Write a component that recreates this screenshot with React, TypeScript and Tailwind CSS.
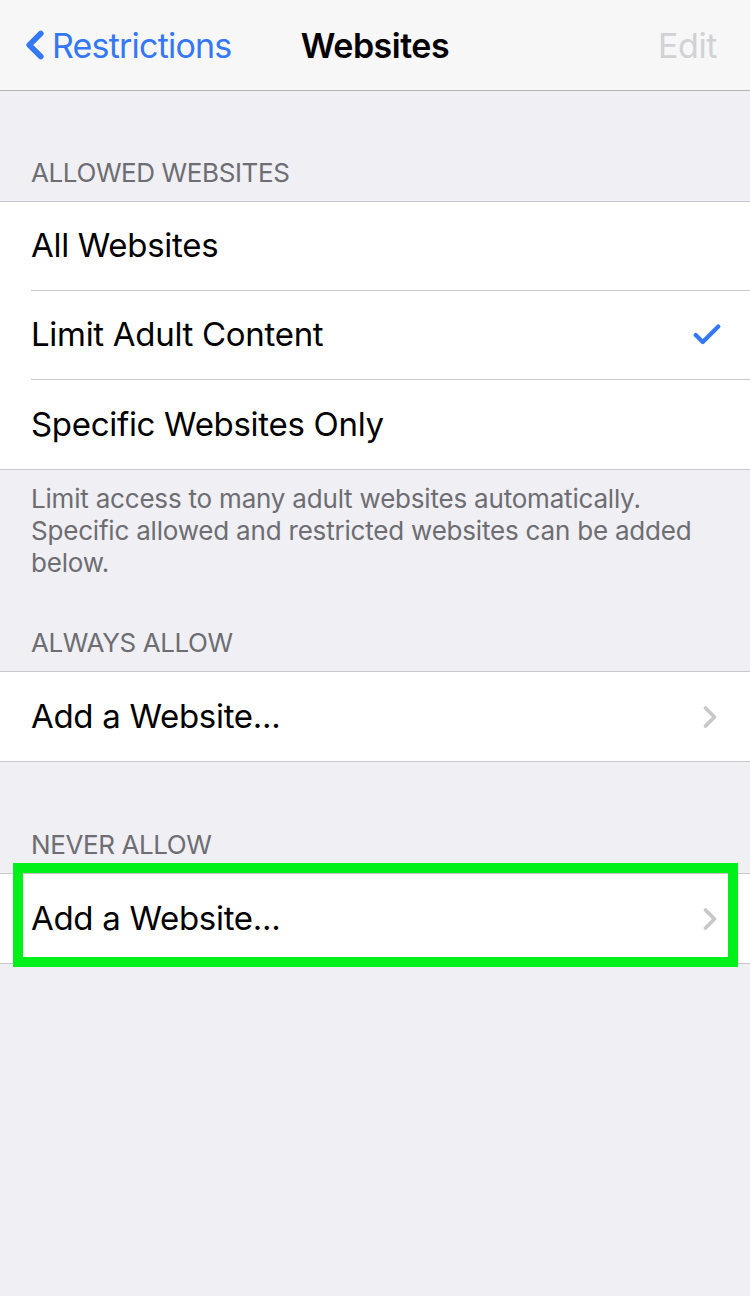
import { ChevronLeft, ChevronRight, Check } from "lucide-react"

type Row = { label: string; checked?: boolean; chevron?: boolean }

function SectionHeader({ text, pt }: { text: string; pt: string }) {
  return (
    <div className={`px-[31px] pb-[13px] ${pt} text-[26px] leading-[31px] text-[#6d6d72] uppercase tracking-[-0.4px]`}>
      {text}
    </div>
  )
}

function Group({ rows }: { rows: Row[] }) {
  return (
    <div className="bg-white border-y border-[#c8c7cc]">
      {rows.map((row, i) => (
        <div key={i} className="pl-[31px]">
          <div
            className={`h-[89px] flex items-center pr-[30px] ${
              i < rows.length - 1 ? "border-b border-[#c8c7cc]" : ""
            }`}
          >
            <span className="flex-1 text-[33px] text-black tracking-[-0.3px]">{row.label}</span>
            {row.checked && <Check size={34} strokeWidth={3} className="text-[#3478f6] mr-[-4px]" />}
            {row.chevron && <ChevronRight size={36} strokeWidth={2.5} className="text-[#c7c7cc] mr-[-8px]" />}
          </div>
        </div>
      ))}
    </div>
  )
}

export default function App() {
  return (
    <div
      className="w-[750px] min-h-[1296px] bg-[#efeff4]"
      style={{ fontFamily: "Inter, 'Liberation Sans', sans-serif" }}
    >
      {/* Nav bar */}
      <div className="relative h-[91px] bg-[#f7f7f7] border-b border-[#b2b2b2] flex items-center">
        <div className="flex items-center pl-[12px] text-[#3478f6]">
          <ChevronLeft size={46} strokeWidth={3} className="-mr-[6px]" />
          <span className="text-[34px] tracking-[-0.8px]">Restrictions</span>
        </div>
        <div className="absolute left-0 right-0 text-center text-[34px] font-semibold text-black tracking-[-0.5px] pointer-events-none">
          Websites
        </div>
        <span className="ml-auto pr-[33px] text-[34px] text-[#d1d1d6] tracking-[-0.4px]">Edit</span>
      </div>

      <SectionHeader text="Allowed Websites" pt="pt-[66px]" />
      <Group
        rows={[
          { label: "All Websites" },
          { label: "Limit Adult Content", checked: true },
          { label: "Specific Websites Only" },
        ]}
      />
      <div className="px-[31px] pt-[13px] text-[26px] leading-[32px] text-[#6d6d72] tracking-[-0.2px]">
        Limit access to many adult websites automatically. Specific allowed and restricted websites can be added below.
      </div>

      <SectionHeader text="Always Allow" pt="pt-[48px]" />
      <Group rows={[{ label: "Add a Website...", chevron: true }]} />

      <SectionHeader text="Never Allow" pt="pt-[67px]" />
      <div className="relative">
        <Group rows={[{ label: "Add a Website...", chevron: true }]} />
        <div className="absolute left-[13px] top-[-10px] w-[725px] h-[104px] border-[10px] border-[#00f01a] pointer-events-none" />
      </div>
    </div>
  )
}
